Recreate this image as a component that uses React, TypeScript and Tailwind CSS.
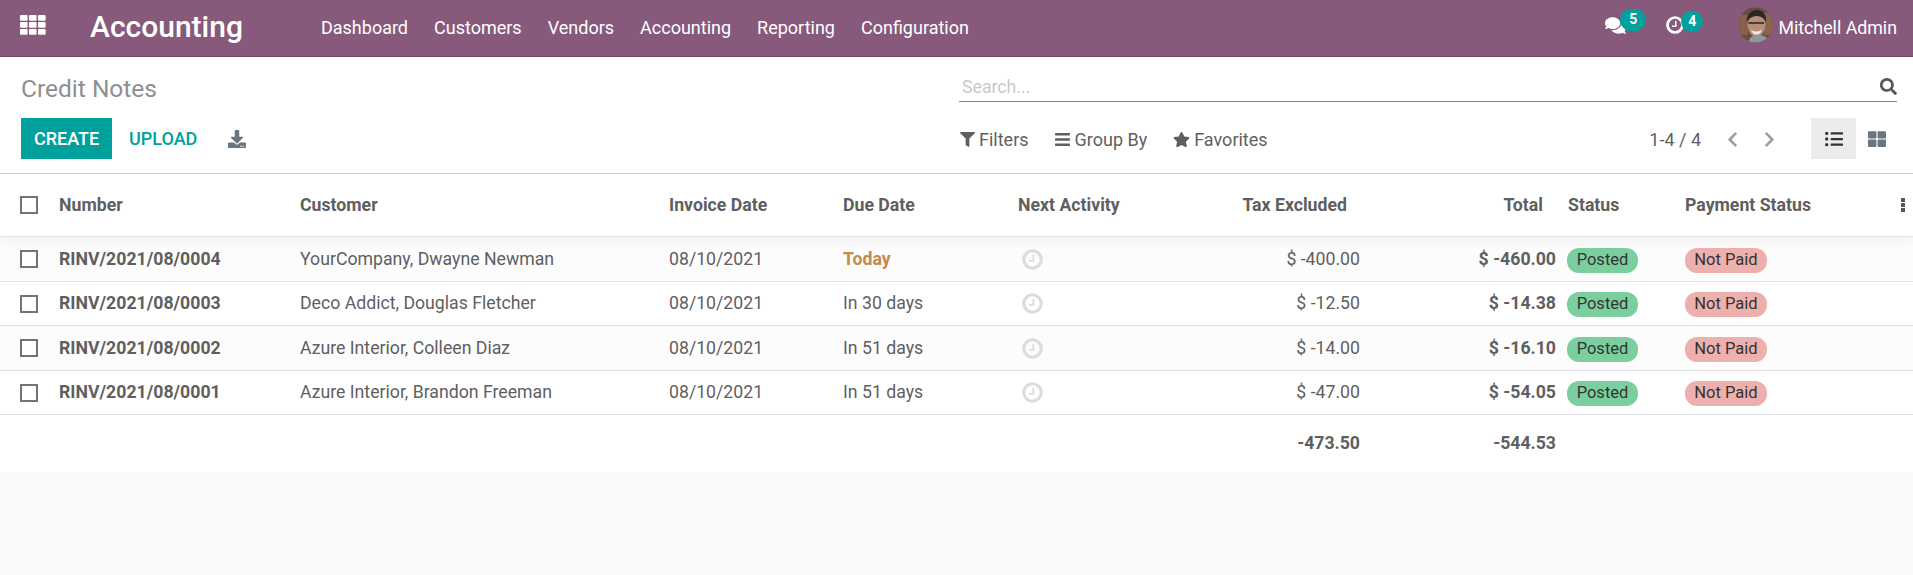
import { FaComments, FaSearch, FaFilter, FaBars, FaStar, FaDownload, FaChevronLeft, FaChevronRight, FaListUl, FaThLarge } from "react-icons/fa";

const NAV_ITEMS = ["Dashboard", "Customers", "Vendors", "Accounting", "Reporting", "Configuration"];

const ROW_COLS = "grid grid-cols-[47px_241px_369px_174px_175px_162px_204px_190px_117px_1fr] items-center";

const INVOICES = [
  { number: "RINV/2021/08/0004", customer: "YourCompany, Dwayne Newman", due: "Today", tax: "$ -400.00", total: "$ -460.00" },
  { number: "RINV/2021/08/0003", customer: "Deco Addict, Douglas Fletcher", due: "In 30 days", tax: "$ -12.50", total: "$ -14.38" },
  { number: "RINV/2021/08/0002", customer: "Azure Interior, Colleen Diaz", due: "In 51 days", tax: "$ -14.00", total: "$ -16.10" },
  { number: "RINV/2021/08/0001", customer: "Azure Interior, Brandon Freeman", due: "In 51 days", tax: "$ -47.00", total: "$ -54.05" },
];

function AppsIcon() {
  const cells = [0, 1, 2];
  return (
    <svg width="26" height="20" viewBox="0 0 26 20" fill="#fff" className="mb-[6px]">
      {cells.map((r) =>
        cells.map((c) => <rect key={`${r}-${c}`} x={c * 9} y={r * 7} width="7.6" height="5.8" rx="1" />)
      )}
    </svg>
  );
}

// fa-clock-o: heavy ring, short hand going up and to the left
function ClockIcon({ size, color }: { size: number; color: string }) {
  return (
    <svg width={size} height={size} viewBox="0 0 24 24" fill="none" stroke={color}>
      <circle cx="12" cy="12" r="10" strokeWidth="3.6" />
      <path d="M13 6.500v7H8" strokeWidth="2" />
    </svg>
  );
}

function Avatar() {
  return (
    <svg width="35" height="36" viewBox="0 0 35 36" className="shrink-0">
      <defs>
        <clipPath id="avatar-clip">
          <circle cx="17.5" cy="18" r="17.5" />
        </clipPath>
      </defs>
      <g clipPath="url(#avatar-clip)">
        <rect width="35" height="36" fill="#6a4c3e" />
        <rect x="0" y="8" width="10" height="20" fill="#86604c" />
        <rect x="26" y="6" width="9" height="22" fill="#8a6450" />
        <path d="M10 36c1-6 5-8 10-8s11 2 12 8z" fill="#8f979e" />
        <ellipse cx="18.5" cy="18" rx="9" ry="11.500" fill="#b58f78" />
        <path d="M9 15c-1-8 5-12 10-12s10 4 9 12c-2-4-5-6-9-6s-8 2-10 6z" fill="#2b2624" />
        <path d="M10.500 16h6M20 16h6M16.500 16h3.500" stroke="#262626" strokeWidth="1.4" fill="none" />
        <path d="M13 22.500c2 2.500 8 2.500 11 0-1 4-3 5-5.500 5s-4.500-1-5.500-5z" fill="#efe9e0" />
      </g>
    </svg>
  );
}

function Checkbox() {
  return <span className="block w-[18px] h-[18px] ml-[20px] border-2 border-[#6f7578] bg-white" />;
}

function Badge({ label, className }: { label: string; className: string }) {
  return (
    <span className={`inline-flex items-center justify-center h-[25px] rounded-[12px] text-[16.500px] text-[#333333] ${className}`}>
      {label}
    </span>
  );
}

export default function App() {
  return (
    <div className="min-h-screen bg-[#f9f9f9] font-['Roboto',sans-serif] text-[17.700px] text-[#5f5f5f]">
      {/* Top bar */}
      <div className="flex items-center h-[57px] bg-[#875a7b] border-b border-[#6f4a66] text-white pl-[20px] pr-[16px]">
        <AppsIcon />
        <span className="ml-[44px] mb-[2px] text-[30px] font-medium leading-none">Accounting</span>
        <nav className="flex items-center gap-[26px] ml-[78px] mb-[2px]">
          {NAV_ITEMS.map((item) => (
            <span key={item} className="text-[18px] text-white">{item}</span>
          ))}
        </nav>
        <div className="flex items-center ml-auto mb-[6px]">
          <div className="relative w-[21px] h-[21px] mr-[40px]">
            <FaComments size={21} color="#fff" />
            <span className="absolute left-[15px] top-[-6px] w-[26px] h-[22px] rounded-full bg-[#00a09d] flex items-center justify-center text-[14px] font-bold">5</span>
          </div>
          <div className="relative w-[18px] h-[18px] mr-[54px]">
            <ClockIcon size={18} color="#fff" />
            <span className="absolute left-[15px] top-[-5px] w-[22px] h-[21px] rounded-full bg-[#00a09d] flex items-center justify-center text-[14px] font-bold">4</span>
          </div>
          <Avatar />
          <span className="ml-[5px] text-[17.800px] leading-none mt-[5px]">Mitchell Admin</span>
        </div>
      </div>

      {/* Control panel */}
      <div className="bg-white border-b border-[#cccccc] pt-[20px] pb-[14px] pl-[21px] pr-[16px]">
        <div className="grid grid-cols-[938px_1fr] h-[25px]">
          <div className="text-[24.500px] leading-[24px] text-[#8f8f8f]">Credit Notes</div>
          <div className="flex items-start justify-between border-b border-[#8a8a8a] pl-[3px] h-[25px]">
            <span className="text-[#c9c9c9] leading-[20px]">Search...</span>
            <FaSearch size={17} color="#555" className="mt-[1px]" />
          </div>
        </div>
        <div className="grid grid-cols-[938px_1fr] h-[41px] mt-[16px]">
          <div className="flex items-center">
            <button className="h-[41px] w-[91px] bg-[#00a09d] text-white text-[18px] font-medium">CREATE</button>
            <span className="ml-[17px] text-[#00a09d] text-[18px] font-medium">UPLOAD</span>
            <FaDownload size={18} color="#6b7580" className="ml-[31px]" />
          </div>
          <div className="flex items-center text-[18px] pt-[1px]">
            <span className="flex items-center gap-[4px] pl-[1px]"><FaFilter size={15} />Filters</span>
            <span className="flex items-center gap-[4px] ml-[25px]"><FaBars size={17} />Group By</span>
            <span className="flex items-center gap-[4px] ml-[26px]"><FaStar size={17} />Favorites</span>
            <span className="ml-auto">1-4 / 4</span>
            <FaChevronLeft size={17} color="#9aa0a0" className="ml-[23px]" />
            <FaChevronRight size={17} color="#9aa0a0" className="ml-[20px]" />
            <div className="flex items-center justify-center w-[45px] h-[41px] bg-[#ececec] ml-[33px] -mt-[1px]">
              <FaListUl size={18} color="#333" />
            </div>
            <div className="flex items-center justify-center w-[41px] h-[41px] -mt-[1px]">
              <FaThLarge size={18} color="#6b7580" />
            </div>
          </div>
        </div>
      </div>

      {/* List */}
      <div className={`${ROW_COLS} relative z-10 h-[63px] bg-white border-b border-[#dfe2e6] font-bold shadow-[0_4px_10px_rgba(0,0,0,0.05)]`}>
        <Checkbox />
        <div className="pl-[12px]">Number</div>
        <div className="pl-[12px]">Customer</div>
        <div className="pl-[12px]">Invoice Date</div>
        <div className="pl-[12px]">Due Date</div>
        <div className="pl-[12px]">Next Activity</div>
        <div className="pr-[25px] text-right">Tax Excluded</div>
        <div className="pr-[19px] text-right">Total</div>
        <div className="pl-[6px]">Status</div>
        <div className="flex items-center justify-between pl-[6px] pr-[8px]">
          <span>Payment Status</span>
          <svg width="4" height="14" viewBox="0 0 4 14" fill="#555">
            <rect width="4" height="4" y="0" />
            <rect width="4" height="4" y="5" />
            <rect width="4" height="4" y="10" />
          </svg>
        </div>
      </div>
      {INVOICES.map((inv, i) => (
        <div key={inv.number} className={`${ROW_COLS} h-[44.5px] pt-[1px] border-b border-[#e0e2e8] ${i % 2 === 0 ? "bg-[#fcfcfc]" : "bg-white"}`}>
          <Checkbox />
          <div className="pl-[12px] font-bold">{inv.number}</div>
          <div className="pl-[12px]">{inv.customer}</div>
          <div className="pl-[12px]">08/10/2021</div>
          <div className={`pl-[12px] ${inv.due === "Today" ? "font-bold text-[#c68a4c]" : ""}`}>{inv.due}</div>
          <div className="pl-[16px]"><ClockIcon size={21} color="#dcdcdc" /></div>
          <div className="pr-[12px] text-right">{inv.tax}</div>
          <div className="pr-[6px] text-right font-bold">{inv.total}</div>
          <div className="pl-[5px]"><Badge label="Posted" className="w-[71px] bg-[#7bcf9f]" /></div>
          <div className="pl-[6px]"><Badge label="Not Paid" className="w-[82px] bg-[#eeb0ad]" /></div>
        </div>
      ))}
      <div className={`${ROW_COLS} h-[57px] bg-white font-bold`}>
        <div className="col-start-7 pr-[12px] text-right">-473.50</div>
        <div className="pr-[6px] text-right">-544.53</div>
      </div>
    </div>
  );
}
